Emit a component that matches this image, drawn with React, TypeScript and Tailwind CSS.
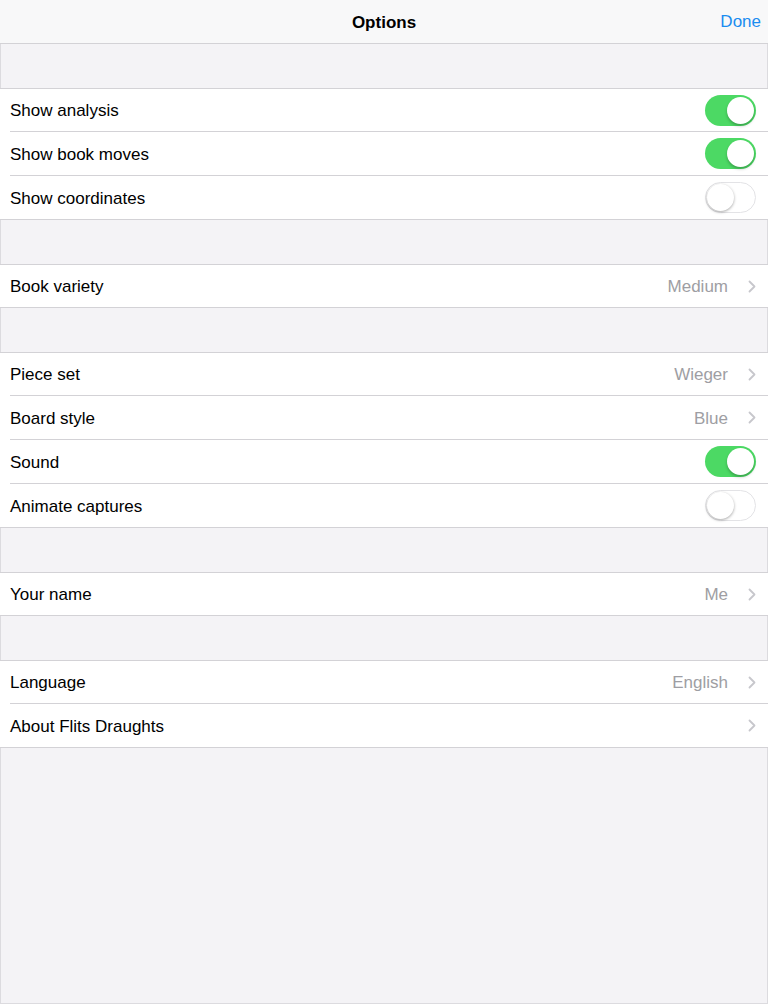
import React from "react";

const font = { fontFamily: '"Liberation Sans", Arial, Helvetica, sans-serif' };

function Toggle({ on }: { on: boolean }) {
  if (on) {
    return (
      <div className="relative w-[51px] h-[31px] rounded-full bg-[#4cd964] shrink-0">
        <div className="absolute top-[2px] right-[2px] w-[27px] h-[27px] rounded-full bg-white shadow-[0_2px_3px_rgba(0,0,0,0.25)]" />
      </div>
    );
  }
  return (
    <div className="relative w-[51px] h-[31px] rounded-full bg-white border-[1.5px] border-[#e3e3e6] shrink-0">
      <div className="absolute top-[0.5px] left-[0.5px] w-[27px] h-[27px] rounded-full bg-white shadow-[0_1px_3px_rgba(0,0,0,0.35)]" />
    </div>
  );
}

function Chevron() {
  return (
    <svg width="8" height="13" viewBox="0 0 8 13" className="shrink-0">
      <path d="M1.5 1.5 L6.5 6.5 L1.5 11.5" fill="none" stroke="#c7c7cc" strokeWidth="1.8" strokeLinecap="round" strokeLinejoin="round" />
    </svg>
  );
}

type Row = { label: string; toggle?: boolean; value?: string; chevron?: boolean };

function Group({ rows }: { rows: Row[] }) {
  return (
    <div className="bg-white border-t border-b border-[#d3d2d6]">
      {rows.map((r, i) => {
        const last = i === rows.length - 1;
        const h = i === 0 ? (last ? "h-[42px]" : "h-[43px]") : last ? "h-[43px]" : "h-[44px]";
        return (
          <div key={r.label} className={`flex pl-[10px] ${h}`}>
            <div className={`flex flex-1 items-center pr-[12px] ${last ? "" : "border-b border-[#d3d2d6]"}`}>
              <span className="flex-1 text-[17px] text-black leading-none pt-[1px]">{r.label}</span>
              {r.toggle !== undefined && <Toggle on={r.toggle} />}
              {r.value !== undefined && (
                <span className="text-[17px] text-[#9e9ea3] leading-none mr-[20px] pt-[1px]">{r.value}</span>
              )}
              {r.chevron && <Chevron />}
            </div>
          </div>
        );
      })}
    </div>
  );
}

function Gap() {
  return <div className="h-[44px] bg-[#f4f3f6] border-x border-[#dcdbdf]" />;
}

export default function App() {
  return (
    <div style={font} className="w-[768px] h-[1004px] flex flex-col bg-[#f4f3f6] overflow-hidden">
      <div className="h-[44px] shrink-0 bg-[#f8f8f9] border-b border-[#d3d2d6] relative flex items-center justify-center">
        <span className="text-[17px] font-bold text-black leading-none pt-[2px]">Options</span>
        <span className="absolute right-[7px] top-[13px] text-[17px] text-[#1a8cf0] leading-none">Done</span>
      </div>
      <Gap />
      <Group
        rows={[
          { label: "Show analysis", toggle: true },
          { label: "Show book moves", toggle: true },
          { label: "Show coordinates", toggle: false },
        ]}
      />
      <Gap />
      <Group rows={[{ label: "Book variety", value: "Medium", chevron: true }]} />
      <Gap />
      <Group
        rows={[
          { label: "Piece set", value: "Wieger", chevron: true },
          { label: "Board style", value: "Blue", chevron: true },
          { label: "Sound", toggle: true },
          { label: "Animate captures", toggle: false },
        ]}
      />
      <Gap />
      <Group rows={[{ label: "Your name", value: "Me", chevron: true }]} />
      <Gap />
      <Group
        rows={[
          { label: "Language", value: "English", chevron: true },
          { label: "About Flits Draughts", chevron: true },
        ]}
      />
      <div className="flex-1 bg-[#f4f3f6] border-x border-b border-[#dcdbdf]" />
    </div>
  );
}
